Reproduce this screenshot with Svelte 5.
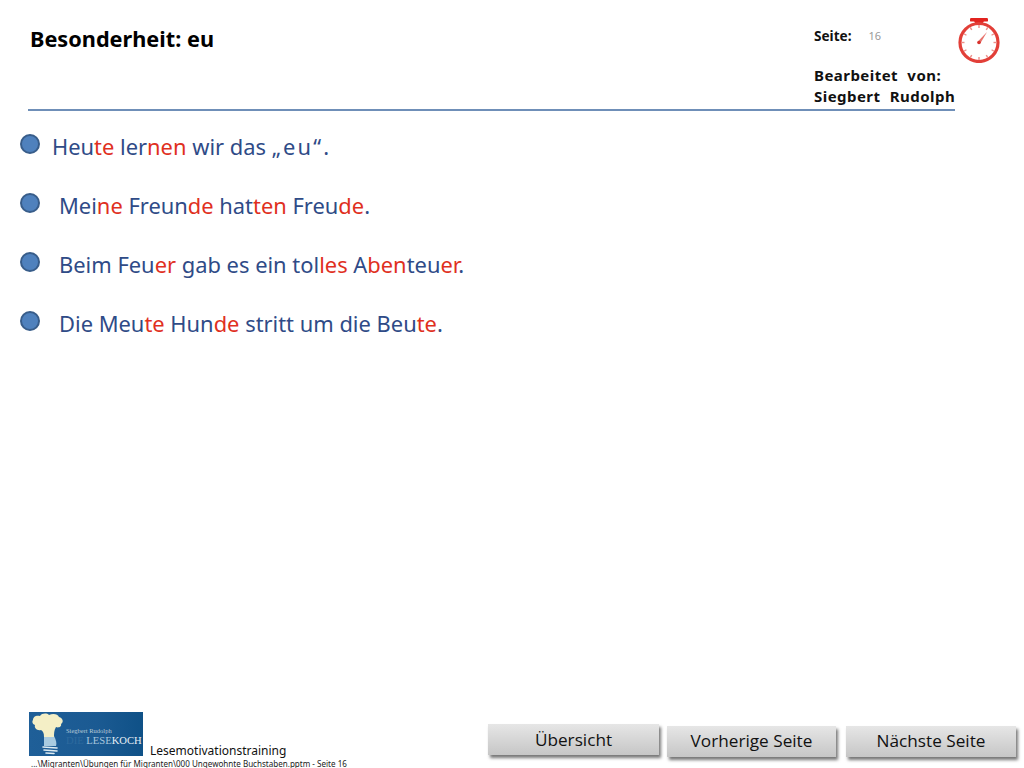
<script>
  const lines = [
    { indent: false, parts: [['Heu'],['te',1],[' ler'],['nen',1],[' wir das '],['„eu“.',2]] },
    { indent: true, parts: [['Mei'],['ne',1],[' Freun'],['de',1],[' hat'],['ten',1],[' Freu'],['de',1],['.']] },
    { indent: true, parts: [['Beim Feu'],['er',1],[' gab es ein tol'],['les',1],[' A'],['ben',1],['teu'],['er',1],['.']] },
    { indent: true, parts: [['Die Meu'],['te',1],[' Hun'],['de',1],[' stritt um die Beu'],['te',1],['.']] }
  ];
  const ticks = [0,30,60,90,120,150,180,210,240,270,300,330];
</script>

<div class="slide">
  <header class="head">
    <h1 class="title">Besonderheit: eu</h1>
    <div class="meta">
      <div class="page"><span class="page-label">Seite:</span><span class="page-num">16</span></div>
      <div class="author">Bearbeitet von:<br />Siegbert Rudolph</div>
    </div>
    <svg class="watch" viewBox="0 0 44 46" width="44" height="46" aria-hidden="true">
      <rect x="13" y="1" width="18" height="3.6" rx="1.2" fill="#e2231f" />
      <path d="M17 4h10l-2.5 4h-5z" fill="#e2231f" />
      <circle cx="22" cy="25.5" r="19" fill="none" stroke="#e23f38" stroke-width="3.2" />
      {#each ticks as t}
        <line x1="22" y1="8" x2="22" y2="11" stroke="#ec8f89" stroke-width="1.4" transform="rotate({t} 22 25.5)" />
      {/each}
      <path d="M20.6 24.8L30 15L23.4 26.2z" fill="#e8726c" />
      <circle cx="22" cy="25.5" r="1.8" fill="#d8322c" />
    </svg>
  </header>

  <ul class="list">
    {#each lines as l}
      <li class="row">
        <span class="dot"></span>
        <span class="line" class:indent={l.indent}>{#each l.parts as p}{#if p[1] === 1}<span class="red">{p[0]}</span>{:else if p[1] === 2}<span class="quoted">{p[0]}</span>{:else}{p[0]}{/if}{/each}</span>
      </li>
    {/each}
  </ul>

  <footer class="foot">
    <div class="brand">
      <div class="brand-top">
        <div class="logo">
          <svg class="bulb" viewBox="0 0 37 44" width="37" height="44" aria-hidden="true">
            <path d="M15 24L25 24C27 28 28 31 27 34L15 34C15 30 15 27 15 24Z" fill="#a9cbe0" />
            <path d="M4 8C4 4 8 3 11 4C13 1 18 1 20 3C24 1 29 2 30 5C34 6 35 10 32 12C33 15 29 16 27 15C25 18 25 22 25 25L15 25C15 21 14 19 12 18C8 19 5 16 6 13C3 12 3 9 4 8Z" fill="#f4efc6" />
            <g stroke="#dfecf2" stroke-width="1.6" stroke-linecap="round">
              <line x1="14" y1="35" x2="28" y2="36" />
              <line x1="15" y1="38" x2="28" y2="39" />
              <line x1="17" y1="41" x2="25" y2="41.5" />
            </g>
          </svg>
          <div class="logo-text">
            <div class="logo-name">Siegbert Rudolph</div>
            <div class="logo-brand"><span class="logo-die">DIE</span> LESE<span class="logo-koch">KOCH</span></div>
          </div>
        </div>
        <div class="course">Lesemotivationstraining</div>
      </div>
      <div class="path">...\Migranten\Übungen für Migranten\000 Ungewohnte Buchstaben.pptm - Seite 16</div>
    </div>
    <div class="buttons">
      <button class="btn first">Übersicht</button>
      <button class="btn second">Vorherige Seite</button>
      <button class="btn third">Nächste Seite</button>
    </div>
  </footer>
</div>

<style>
  :global(body) { margin: 0; background: #fff; }
  .slide {
    width: 1024px; height: 768px; box-sizing: border-box; overflow: hidden;
    display: flex; flex-direction: column;
    font-family: "Noto Sans", sans-serif;
  }
  .head {
    display: flex; align-items: flex-start; height: 111px; box-sizing: border-box;
    margin-left: 28px; width: 927px;
    border-bottom: 2px solid #6f8fb8;
  }
  .title {
    margin: 25px 0 0 2px; flex: 1; font-size: 21.7px; line-height: 28px; font-weight: 700; color: #000;
  }
  .meta { width: 141px; margin-top: 25px; color: #111; font-weight: 700; }
  .page { display: flex; align-items: center; height: 20px; font-size: 13.6px; }
  .page-num { margin-left: 17px; font-size: 11px; font-weight: 400; color: #999; }
  .author { margin-top: 20px; font-size: 15px; line-height: 21px; letter-spacing: 0.45px; word-spacing: 5px; white-space: nowrap; font-weight: 700; }
  .watch { position: absolute; left: 957px; top: 17px; }
  .list { list-style: none; margin: 0; padding: 0; flex: 1; }
  .row { display: flex; align-items: center; height: 59.1px; position: relative; margin-left: 20px; }
  .row:first-child { margin-top: 6px; }
  .dot {
    width: 16px; height: 16px; border-radius: 50%; background: #4f81bd; border: 2px solid #385d8a;
    margin-top: -5px; flex: none;
  }
  .line { margin-left: 12px; margin-top: 0; font-size: 21.9px; color: #2f4b87; white-space: nowrap; }
  .line.indent { margin-left: 19px; }
  .quoted { letter-spacing: 2.2px; }
  .red { color: #e0301e; }
  .foot { height: 56px; display: flex; align-items: flex-start; position: relative; }
  .brand { margin-left: 29px; width: 459px; }
  .brand-top { display: flex; align-items: flex-end; }
  .logo {
    width: 114px; height: 44px; display: flex; overflow: hidden; flex: none;
    background: linear-gradient(90deg, #1f5f98, #1b5a92 60%, #0f5187);
  }
  .bulb { flex: none; }
  .logo-text { font-family: "Liberation Serif", serif; margin-top: 14px; white-space: nowrap; }
  .logo-name { font-size: 6.5px; line-height: 9px; color: #b9cbd8; }
  .logo-brand { font-size: 10.6px; color: #a8c6dd; line-height: 12px; }
  .logo-die { color: #2d6a9e; }
  .logo-koch { color: #e6eef5; }
  .course { margin-left: 7px; font-size: 12px; line-height: 14px; margin-bottom: -2px; color: #111; }
  .path { margin: 2px 0 0 2px; font-size: 8.07px; line-height: 11px; color: #222; white-space: nowrap; }
  .buttons { display: flex; align-items: flex-start; }
  .btn {
    border: 0; padding: 0; height: 31px; font-family: "Open Sans", sans-serif; font-size: 17.2px; color: #111;
    background: linear-gradient(180deg, #e6e6e6, #c6c6c6);
    box-shadow: 2px 3px 3px #777;
  }
  .first { width: 171px; margin-top: 12px; margin-right: 8px; }
  .second { width: 169px; margin-top: 14px; margin-right: 10px; padding-bottom: 2px; }
  .third { width: 170px; margin-top: 14px; padding-bottom: 2px; }
</style>
